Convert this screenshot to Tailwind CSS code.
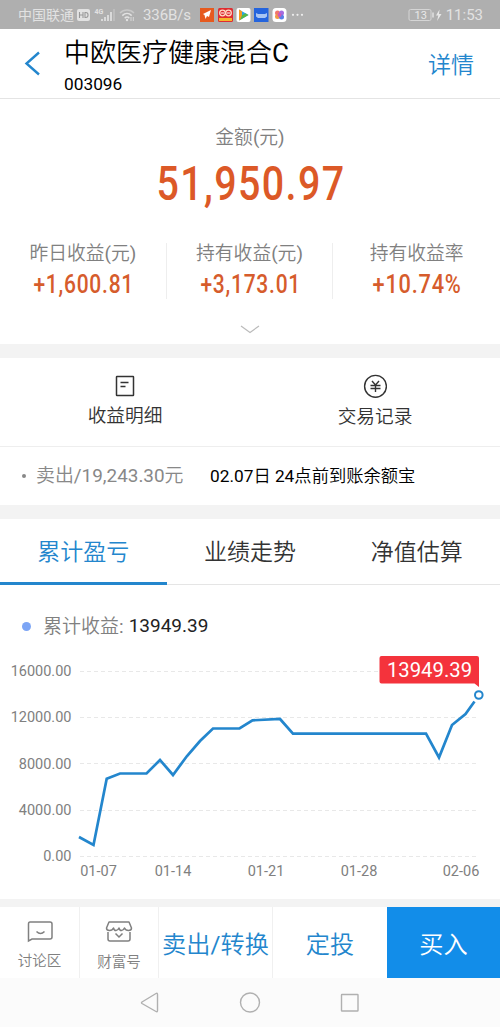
<!DOCTYPE html>
<html lang="zh-CN">

<head>
    <meta charset="utf-8">
    <meta name="viewport" content="width=device-width, initial-scale=1.0">
    <script src="https://cdn.jsdelivr.net/npm/@tailwindcss/browser@4"></script>
    <title>中欧医疗健康混合C</title>
</head>

<body class="w-[500px] bg-white font-['Roboto','Noto_Sans_CJK_SC',sans-serif] text-[#333] whitespace-nowrap overflow-x-hidden">

    <!-- status bar -->
    <div class="h-[29px] bg-[#afafaf] flex items-center text-[#e2e2e2] pl-[18px] pr-[18px]">
        <span class="text-[14px] w-[57px] leading-none pt-px">中国联通</span>
        <svg class="ml-[1px] mt-px" width="15" height="14" viewBox="0 0 15 14">
            <rect x="1" y="1" width="13" height="12" rx="2" fill="#e2e2e2" />
            <path d="M3.5 4v6M7 4v6M3.5 7H7M9 4.5v5h.8c3 0 3-5 0-5z" stroke="#999" stroke-width="1.1" fill="none" />
        </svg>
        <svg class="ml-[2px]" width="24" height="16" viewBox="0 0 24 16">
            <text x="1.500" y="6.500" font-size="7" font-weight="700" fill="#e2e2e2">4G</text>
            <path d="M9 14v-2M12 14v-4M15 14V8M18 14V5" stroke="#e2e2e2" stroke-width="1.7" />
            <path d="M21 14V2" stroke="#c2c2c2" stroke-width="1.5" />
        </svg>
        <svg class="ml-[2px]" width="16" height="14" viewBox="0 0 16 14" fill="none" stroke-width="1.5">
            <path d="M1 5C5 1 11 1 15 5" stroke="#c8c8c8" />
            <path d="M3.3 7.6c2.8-2.8 6.6-2.8 9.4 0M5.7 10.2c1.5-1.5 3.3-1.5 4.6 0" stroke="#e2e2e2" />
            <circle cx="8" cy="12" r="1.2" fill="#e2e2e2" stroke="none" />
            <path d="M12 9v4M14.3 9v4" stroke="#d8d8d8" stroke-width="1" />
        </svg>
        <span class="text-[15px] ml-[8px] w-[57px] leading-none pt-[2px] tracking-[-0.1px]">336B/s</span>
        <svg class="mt-px" width="104" height="16" viewBox="200 7 104 16">
            <rect x="200" y="8" width="14" height="14" fill="#e65a1f" />
            <path d="M203 14l8-4-2 7-2-1-1.500 3-1-4z" fill="#fff" />
            <rect x="218" y="8" width="15" height="14" rx="1.500" fill="#df2c30" />
            <circle cx="222.500" cy="13" r="2.800" fill="none" stroke="#ffd9c5" stroke-width="1.300" />
            <circle cx="228.500" cy="13" r="2.800" fill="none" stroke="#ffd9c5" stroke-width="1.300" />
            <path d="M221 13h3M227 13h3" stroke="#fff" />
            <rect x="219" y="18" width="13" height="3" fill="#f5b52c" />
            <rect x="236.500" y="8" width="14" height="14" rx="2" fill="#fff" />
            <path d="M239 9.500v11l9.500-5.500z" fill="#29a5e8" />
            <path d="M239 9.500l3 1.700v7.500l-3 1.800z" fill="#f59a23" />
            <path d="M240 20l8.500-5-3-1.800-3.500 2z" fill="#55b948" />
            <rect x="254" y="8" width="14.500" height="14" fill="#2464dd" />
            <path d="M256 13l2 1h7l2-1v3.500l-2 1.500h-7l-2-1.500z" fill="#a8c5f3" />
            <rect x="272.500" y="8" width="14" height="14" rx="3.500" fill="#fff" />
            <circle cx="277.500" cy="13" r="2.500" fill="#f2766d" />
            <circle cx="281.500" cy="13" r="2.500" fill="#a46be0" />
            <circle cx="277.500" cy="16.500" r="2.500" fill="#f39b45" />
            <circle cx="281.500" cy="17" r="2.500" fill="#5a7ee8" />
            <circle cx="279.500" cy="15" r="2" fill="#d357b5" />
            <circle cx="293" cy="14.800" r="1.100" fill="#eee" />
            <circle cx="297.500" cy="14.800" r="1.100" fill="#eee" />
            <circle cx="302" cy="14.800" r="1.100" fill="#eee" />
        </svg>
        <svg class="ml-auto" width="36" height="14" viewBox="0 0 36 14">
            <rect x="1" y="1.500" width="22" height="11" rx="1.500" fill="none" stroke="#d5d5d5" />
            <path d="M25 4.500v5" stroke="#e2e2e2" stroke-width="1.500" />
            <text x="6.500" y="11" font-size="11" fill="#e8e8e8">13</text>
            <path d="M31.500 1.500L28 7.500h2.300L29 13l4.500-7H31z" fill="#e8e8e8" />
        </svg>
        <span class="text-[15px] ml-[2px] leading-none pt-[2px] -mr-px">11:53</span>
    </div>

    <!-- header -->
    <div class="h-[70px] border-b border-[#e4e4e4] flex pl-6 pr-[26px]">
        <svg class="mt-[22px]" width="17" height="25" viewBox="0 0 17 25">
            <path d="M15 1.500L2.500 12.500L15 23.500" fill="none" stroke="#2386cd" stroke-width="2.400" />
        </svg>
        <div class="ml-[23px] text-black">
            <div class="text-[26px] leading-[30px] mt-[9px] font-[350]">中欧医疗健康混合<span class="font-normal">C</span></div>
            <div class="text-[17.300px] leading-[20px] mt-[6px]">003096</div>
        </div>
        <div class="ml-auto mt-[21px] text-[23px] leading-[32px] text-[#2386cd] font-[350]">详情</div>
    </div>

    <!-- amount -->
    <div class="h-[245px] text-center">
        <div class="pt-[27px] text-[18.800px] leading-[24px] text-[#808080] font-[350]">金额<span class="font-normal">(</span>元<span class="font-normal">)</span></div>
        <div class="mt-[8px] text-[48px] leading-[52px] font-medium text-[#dc5927]"><span class="inline-block scale-x-[0.82] tracking-[1.700px] -mx-6 pl-[2px]">51,950.97</span></div>
        <div class="grid grid-cols-3 mt-[33px] h-[52px] divide-x divide-[#eee]">
            <div>
                <div class="text-[18.800px] leading-[22px] text-[#808080] font-[350]">昨日收益<span class="font-normal">(</span>元<span class="font-normal">)</span></div>
                <div class="mt-[6px] text-[25px] leading-[28px] font-medium text-[#d65c2c]"><span class="inline-block scale-x-[0.84] tracking-[0.900px] pl-[2px]">+1,600.81</span></div>
            </div>
            <div>
                <div class="text-[18.800px] leading-[22px] text-[#808080] font-[350]">持有收益<span class="font-normal">(</span>元<span class="font-normal">)</span></div>
                <div class="mt-[6px] text-[25px] leading-[28px] font-medium text-[#d65c2c]"><span class="inline-block scale-x-[0.84] tracking-[0.900px] pl-[2px]">+3,173.01</span></div>
            </div>
            <div>
                <div class="text-[18.800px] leading-[22px] text-[#808080] font-[350]">持有收益率</div>
                <div class="mt-[6px] text-[25px] leading-[28px] font-medium text-[#d65c2c]"><span class="inline-block scale-x-[0.87] tracking-[0.900px] pl-[2px]">+10.74%</span></div>
            </div>
        </div>
        <svg class="mx-auto mt-[30px]" width="20" height="9" viewBox="0 0 20 9">
            <path d="M1 1l9 6.500L19 1" fill="none" stroke="#bbb" stroke-width="1.200" />
        </svg>
    </div>
    <div class="h-[14px] bg-[#f3f3f3]"></div>

    <!-- shortcuts -->
    <div class="h-[89px] grid grid-cols-2 border-b border-[#eee] text-[18.700px] leading-[24px] font-[350]">
        <div class="flex flex-col items-center">
            <svg class="mt-[17px]" width="20" height="22" viewBox="0 0 20 22" fill="none" stroke="#333" stroke-width="1.500">
                <rect x="1.500" y="1.500" width="17" height="19" rx=".5" />
                <path d="M5.500 7.500h8M5.500 11.500h5" />
            </svg>
            <div class="mt-[7px]">收益明细</div>
        </div>
        <div class="flex flex-col items-center">
            <svg class="mt-[16px]" width="24" height="24" viewBox="0 0 24 24" fill="none" stroke="#333" stroke-width="1.400">
                <circle cx="12.500" cy="12.300" r="10.900" />
                <path d="M9 7l3.500 4L16 7M7.500 11.500h10M7.500 14.500h10M12.500 11v7" />
            </svg>
            <div class="mt-[7px]">交易记录</div>
        </div>
    </div>
    <div class="h-[58px] flex items-center pl-[22px]">
        <span class="w-1 h-1 rounded-full bg-[#888]"></span>
        <span class="ml-[10px] w-[174px] pt-px text-[18.900px] text-[#888] font-[350]">卖出<span class="font-normal">/19,243.30</span>元</span>
        <span class="pt-px text-[17.300px] text-black font-[350]"><span class="font-normal">02.07</span>日 <span class="font-normal">24</span>点前到账余额宝</span>
    </div>
    <div class="h-[14px] bg-[#f3f3f3]"></div>

    <!-- tabs -->
    <div class="h-[66px] grid grid-cols-3 border-b border-[#e5e5e5] text-[23px] leading-[67px] text-center font-[350]">
        <div class="text-[#2386cd] border-b-3 border-[#2386cd] h-[66px]">累计盈亏</div>
        <div>业绩走势</div>
        <div>净值估算</div>
    </div>

    <!-- chart -->
    <div class="h-[314px] pt-[29px]">
        <div class="flex items-center h-[24px] pl-[22px] text-[19px]">
            <span class="w-[9px] h-[9px] rounded-full bg-[#7ca5f5]"></span>
            <span class="ml-[12px] pt-[2px] text-[#808080] font-[350]">累计收益<span class="font-normal">:</span></span>
            <span class="ml-[5px] pt-px text-[#222]">13949.39</span>
        </div>
        <svg class="mt-[12px]" width="500" height="240" viewBox="0 0 500 240">
            <g stroke="#e8e8e8" stroke-dasharray="4 3">
                <path d="M80 21.500H479M80 67.500H479M80 113.500H479M80 160.500H479M80 206.500H479" />
            </g>
            <g fill="#808080" font-size="14.500" text-anchor="end">
                <text x="71.500" y="26">16000.00</text>
                <text x="71.500" y="72">12000.00</text>
                <text x="71.500" y="118.500">8000.00</text>
                <text x="71.500" y="165">4000.00</text>
                <text x="71.500" y="211">0.00</text>
            </g>
            <g fill="#808080" font-size="14.500" text-anchor="middle">
                <text x="98.500" y="225.500">01-07</text>
                <text x="173" y="225.500">01-14</text>
                <text x="266" y="225.500">01-21</text>
                <text x="359" y="225.500">01-28</text>
                <text x="461" y="225.500">02-06</text>
            </g>
            <polyline points="79,187 93.500,195 106.700,128.700 120,123.500 146.500,123.500 160,110 173,125 187,106 200,91 213,78.500 239.500,78.500 252.500,70.300 280,69 293,83.700 426,83.700 439,107.500 452,75 465.500,64 474.500,51.500" fill="none" stroke="#2386cd" stroke-width="2.700" />
            <circle cx="478.800" cy="45" r="3.800" fill="#fff" stroke="#2386cd" stroke-width="2" />
            <path d="M381.500 6H477q2 0 2 2V37L474.500 33.500H381.500q-2 0-2-2V8q0-2 2-2z" fill="#f4333c" />
            <text x="429.500" y="27" font-size="20.300" fill="#fff" text-anchor="middle">13949.39</text>
        </svg>
    </div>
    <div class="h-[8px] bg-[#f3f3f3]"></div>

    <!-- action bar -->
    <div class="h-[71px] flex text-center text-[24.200px] leading-[76px] text-[#2386cd] font-[350]">
        <div class="w-[80px] border-r border-[#f0f0f0] flex flex-col items-center text-[14.500px] leading-[18px] text-[#808080]">
            <svg class="mt-[13px]" width="26" height="23" viewBox="0 0 26 23" fill="none" stroke="#808080" stroke-width="1.500">
                <path d="M3 2H23q2 0 2 2V17q0 2-2 2H5L1.500 21V4q0-2 1.500-2z" />
                <path d="M9.500 11.500q4 4 8 0" />
            </svg>
            <div class="mt-[10px]">讨论区</div>
        </div>
        <div class="w-[79px] border-r border-[#f0f0f0] flex flex-col items-center text-[14.500px] leading-[18px] text-[#808080]">
            <svg class="mt-[13px]" width="28" height="23" viewBox="0 0 28 23" fill="none" stroke="#808080" stroke-width="1.500">
                <path d="M4 2H24L26.500 8q0 2.500-3 2.500T19.500 8q-1 2.500-3 2.500T14 8q-1 2.500-3 2.500T8.500 8q-1 2.500-4 2.500T1.500 8z" stroke-linejoin="round" />
                <path d="M3 12v7q0 2 2 2H23q2 0 2-2V12M10.500 13.500L14 17l3.500-3.500" />
            </svg>
            <div class="mt-[11px]">财富号</div>
        </div>
        <div class="w-[114px] border-r border-[#f0f0f0]">卖出<span class="font-normal">/</span>转换</div>
        <div class="w-[114px]">定投</div>
        <div class="w-[113px] bg-[#128de9] text-white h-[71px]">买入</div>
    </div>

    <!-- system navigation -->
    <div class="h-[49px] bg-[#fbfbfb]">
        <svg width="500" height="49" viewBox="0 0 500 49" fill="none" stroke="#b0b0b0" stroke-width="1.400">
            <path d="M156 15.500q1.500-.8 1.500 1V32.500q0 1.800-1.500 1L142 25.500q-1-.8 0-1.500z" />
            <circle cx="250" cy="24.500" r="9.500" />
            <rect x="341.500" y="16.500" width="16.500" height="16.500" rx=".5" />
        </svg>
    </div>

</body>

</html>
